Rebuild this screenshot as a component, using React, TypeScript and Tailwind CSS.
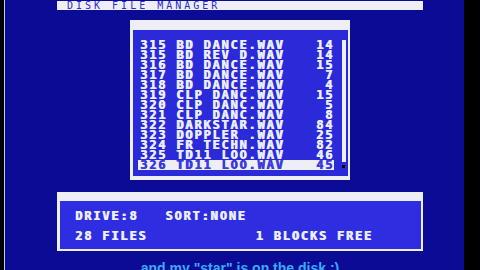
import React from "react";

const rows: [string, string][] = [
  ["315 BD DANCE.WAV", "14"],
  ["315 BD REV D.WAV", "14"],
  ["316 BD DANCE.WAV", "15"],
  ["317 BD DANCE.WAV", "7"],
  ["318 BD DANCE.WAV", "4"],
  ["319 CLP DANC.WAV", "15"],
  ["320 CLP DANC.WAV", "5"],
  ["321 CLP DANC.WAV", "8"],
  ["322 DARKSTAR.WAV", "84"],
  ["323 DOPPLER .WAV", "25"],
  ["324 FR TECHN.WAV", "82"],
  ["325 TD11 LOO.WAV", "46"],
];

const mono =
  "font-['DejaVu_Sans_Mono',monospace] font-bold text-[12px] tracking-[1.8px] whitespace-pre [text-shadow:0.8px_0_0_currentColor]";

export default function App() {
  return (
    <div className="w-[480px] h-[270px] overflow-hidden flex bg-black">
      <div className="w-[4px] bg-black" />
      <div className="w-[1px] bg-[#c8c8e0]" />
      <div className="flex-1 bg-[#0b0b96] flex flex-col items-center pl-[11px]">
        {/* header bar */}
        <div className="mt-[1px] h-[9px] w-[366px] shrink-0 bg-[#eeeef6] pl-[10px] flex items-center overflow-hidden">
          <span className="font-['DejaVu_Sans_Mono',monospace] text-[10px] leading-[9px] tracking-[3px] text-[#2a2ad0] whitespace-pre">
            DISK FILE MANAGER
          </span>
        </div>

        {/* list panel */}
        <div className="mt-[10px] w-[220px] h-[160px] shrink-0 bg-[#eeeef6] pt-[10px] pl-[3px] pr-[2px] pb-[4px]">
          <div className="w-full h-full bg-[#2a2ad8] flex">
            <div className="pt-[10px] pl-[5px] flex flex-col">
              {rows.map(([l, r], i) => (
                <div
                  key={i}
                  className={`w-[196px] h-[10px] flex justify-between items-center pl-[2px] text-[#eceeff] leading-[10px] ${mono}`}
                >
                  <span>{l}</span>
                  <span>{r}</span>
                </div>
              ))}
              <div
                className={`w-[196px] h-[10px] flex justify-between items-center pl-[2px] bg-[#eeeef6] text-[#3a3ae0] leading-[10px] ${mono}`}
              >
                <span>326 TD11 LOO.WAV</span>
                <span>45</span>
              </div>
            </div>
            <div className="ml-[8px] pt-[10px] flex flex-col items-start">
              <div className="w-[4px] h-[122px] bg-[#eeeef6]" />
              <div className="mt-[3px] w-[3px] h-[3px] bg-black" />
            </div>
          </div>
        </div>

        {/* bottom panel */}
        <div className="mt-[12px] w-[366px] h-[59px] shrink-0 bg-[#eeeef6] pt-[9px] pl-[3px] pr-[2px] pb-[2px]">
          <div className="w-full h-full bg-[#2e2ee0] pl-[15px] pt-[10px] flex flex-col gap-[10px] text-[#eceeff]">
            <div className={`${mono} leading-[10px]`}>DRIVE:8   SORT:NONE</div>
            <div className={`${mono} leading-[10px]`}>28 FILES            1 BLOCKS FREE</div>
          </div>
        </div>

        {/* caption */}
        <div className="mt-[9px] shrink-0 font-['Liberation_Sans',Arial,sans-serif] font-bold text-[14px] leading-[16px] text-[#38aef6] whitespace-pre">
          and my "star" is on the disk ;)
        </div>
      </div>
      <div className="w-[16px] bg-black" />
    </div>
  );
}
